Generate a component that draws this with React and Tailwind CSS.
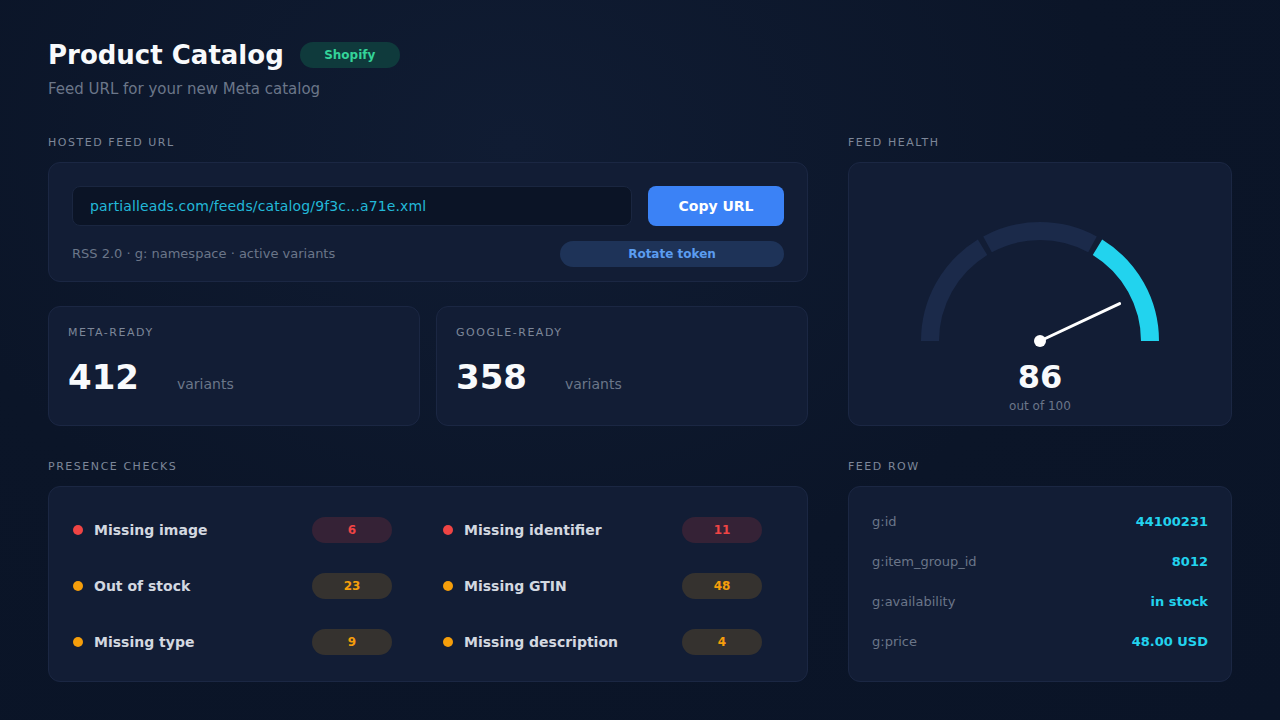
import React from 'react';

const checks = [
  { label: 'Missing image', count: 6, tone: 'red' },
  { label: 'Missing identifier', count: 11, tone: 'red' },
  { label: 'Out of stock', count: 23, tone: 'amber' },
  { label: 'Missing GTIN', count: 48, tone: 'amber' },
  { label: 'Missing type', count: 9, tone: 'amber' },
  { label: 'Missing description', count: 4, tone: 'amber' },
];

const feedRow = [
  { key: 'g:id', value: '44100231' },
  { key: 'g:item_group_id', value: '8012' },
  { key: 'g:availability', value: 'in stock' },
  { key: 'g:price', value: '48.00 USD' },
];

function SectionLabel({ children }) {
  return (
    <div className="text-[11px] tracking-[0.14em] uppercase text-[#7d8799] leading-none mb-[14px]">
      {children}
    </div>
  );
}

// point on the gauge circle, angle in degrees (0 = right, 180 = left)
const pt = (cx, cy, r, deg) => {
  const a = (deg * Math.PI) / 180;
  return [cx + r * Math.cos(a), cy - r * Math.sin(a)];
};

function arcPath(cx, cy, r, from, to) {
  const [x1, y1] = pt(cx, cy, r, from);
  const [x2, y2] = pt(cx, cy, r, to);
  return `M ${x1} ${y1} A ${r} ${r} 0 0 1 ${x2} ${y2}`;
}

function Gauge({ score }) {
  const cx = 120, cy = 125, r = 110;
  const needle = pt(cx, cy, 88, 180 - (score / 100) * 180);
  return (
    <svg width="240" height="135" viewBox="0 0 240 135">
      <path d={arcPath(cx, cy, r, 180, 121.5)} stroke="#1b2a4a" strokeWidth="18" fill="none" />
      <path d={arcPath(cx, cy, r, 118.5, 61.5)} stroke="#1b2a4a" strokeWidth="18" fill="none" />
      <path d={arcPath(cx, cy, r, 58.5, 0)} stroke="#22d3ee" strokeWidth="18" fill="none" />
      <line x1={cx} y1={cy} x2={needle[0]} y2={needle[1]} stroke="#ffffff" strokeWidth="3" strokeLinecap="round" />
      <circle cx={cx} cy={cy} r="6" fill="#ffffff" />
    </svg>
  );
}

export default function App() {
  return (
    <div
      className="w-[1280px] h-[720px] overflow-hidden bg-[#0b1528] bg-[radial-gradient(ellipse_at_40%_20%,#101c33_0%,#0b1528_55%,#0a1427_100%)] text-white px-12 pt-[40px]"
      style={{ fontFamily: '"DejaVu Sans", Verdana, sans-serif' }}
    >
      {/* header */}
      <div className="flex items-center gap-4 h-[30px]">
        <h1 className="text-[26px] font-bold leading-none text-[#f8fafc]">Product Catalog</h1>
        <span className="h-[26px] w-[100px] rounded-full bg-[#0f3a3c] text-[#34d399] text-[12px] font-bold flex items-center justify-center">
          Shopify
        </span>
      </div>
      <p className="mt-[12px] text-[15px] text-[#6b7689] leading-none">Feed URL for your new Meta catalog</p>

      <div className="mt-[40px] grid grid-cols-[760px_384px] gap-x-10">
        {/* left column */}
        <div className="flex flex-col">
          <SectionLabel>Hosted feed URL</SectionLabel>
          <div className="h-[120px] rounded-xl bg-[#121d35] border border-[#1b2743] px-[23px] pt-[23px]">
            <div className="flex gap-4">
              <div className="flex-1 h-10 rounded-lg bg-[#0b1426] border border-[#1a2640] flex items-center px-[17px] text-[14px] tracking-[0.01em] text-[#22b8d8]">
                partialleads.com/feeds/catalog/9f3c...a71e.xml
              </div>
              <button className="w-[136px] h-10 rounded-lg bg-[#3b82f6] text-white text-[14px] font-bold">
                Copy URL
              </button>
            </div>
            <div className="flex items-center justify-between mt-[15px]">
              <span className="text-[13px] text-[#6b7689]">RSS 2.0 · g: namespace · active variants</span>
              <button className="w-[224px] h-[26px] rounded-full bg-[#1e3358] text-[#5b9cf0] text-[12px] font-bold">
                Rotate token
              </button>
            </div>
          </div>

          <div className="grid grid-cols-2 gap-4 mt-6">
            {[
              { label: 'Meta-ready', value: 412 },
              { label: 'Google-ready', value: 358 },
            ].map((s) => (
              <div key={s.label} className="h-[120px] rounded-xl bg-[#121d35] border border-[#1b2743] px-[19px] pt-[20px]">
                <div className="text-[11px] tracking-[0.14em] uppercase text-[#7d8799] leading-none">{s.label}</div>
                <div className="flex items-baseline mt-[22px]">
                  <span className="text-[34px] font-bold leading-none text-[#f8fafc]">{s.value}</span>
                  <span className="ml-[38px] text-[14px] text-[#6b7689]">variants</span>
                </div>
              </div>
            ))}
          </div>
        </div>

        {/* right column */}
        <div className="flex flex-col">
          <SectionLabel>Feed health</SectionLabel>
          <div className="h-[264px] rounded-xl bg-[#121d35] border border-[#1b2743] flex flex-col items-center pt-[53px]">
            <Gauge score={86} />
            <div className="mt-[10px] text-[32px] font-bold leading-none text-[#f8fafc]">86</div>
            <div className="mt-[7px] text-[12px] text-[#6b7689] leading-none">out of 100</div>
          </div>
        </div>

        {/* presence checks */}
        <div className="flex flex-col mt-[35px]">
          <SectionLabel>Presence checks</SectionLabel>
          <div className="h-[196px] rounded-xl bg-[#121d35] border border-[#1b2743] px-[23px] pt-[23px]">
            <div className="grid grid-cols-[320px_320px] gap-x-[50px] gap-y-4">
              {checks.map((c) => (
                <div key={c.label} className="h-10 flex items-center">
                  <span className={`w-[10px] h-[10px] rounded-full ml-[1px] ${c.tone === 'red' ? 'bg-[#ef4444]' : 'bg-[#f59e0b]'}`} />
                  <span className="ml-[11px] flex-1 text-[14px] font-bold text-[#d3d8e0]">{c.label}</span>
                  <span
                    className={`w-20 h-[26px] rounded-full flex items-center justify-center text-[12px] font-bold ${
                      c.tone === 'red' ? 'bg-[#352236] text-[#ef4444]' : 'bg-[#35322f] text-[#f59e0b]'
                    }`}
                  >
                    {c.count}
                  </span>
                </div>
              ))}
            </div>
          </div>
        </div>

        {/* feed row */}
        <div className="flex flex-col mt-[35px]">
          <SectionLabel>Feed row</SectionLabel>
          <div className="h-[196px] rounded-xl bg-[#121d35] border border-[#1b2743] px-[23px] pt-6 flex flex-col gap-[18px]">
            {feedRow.map((r) => (
              <div key={r.key} className="h-[22px] flex items-center justify-between text-[13px]">
                <span className="text-[#6b7689]">{r.key}</span>
                <span className="font-bold text-[#22d3ee]">{r.value}</span>
              </div>
            ))}
          </div>
        </div>
      </div>
    </div>
  );
}
